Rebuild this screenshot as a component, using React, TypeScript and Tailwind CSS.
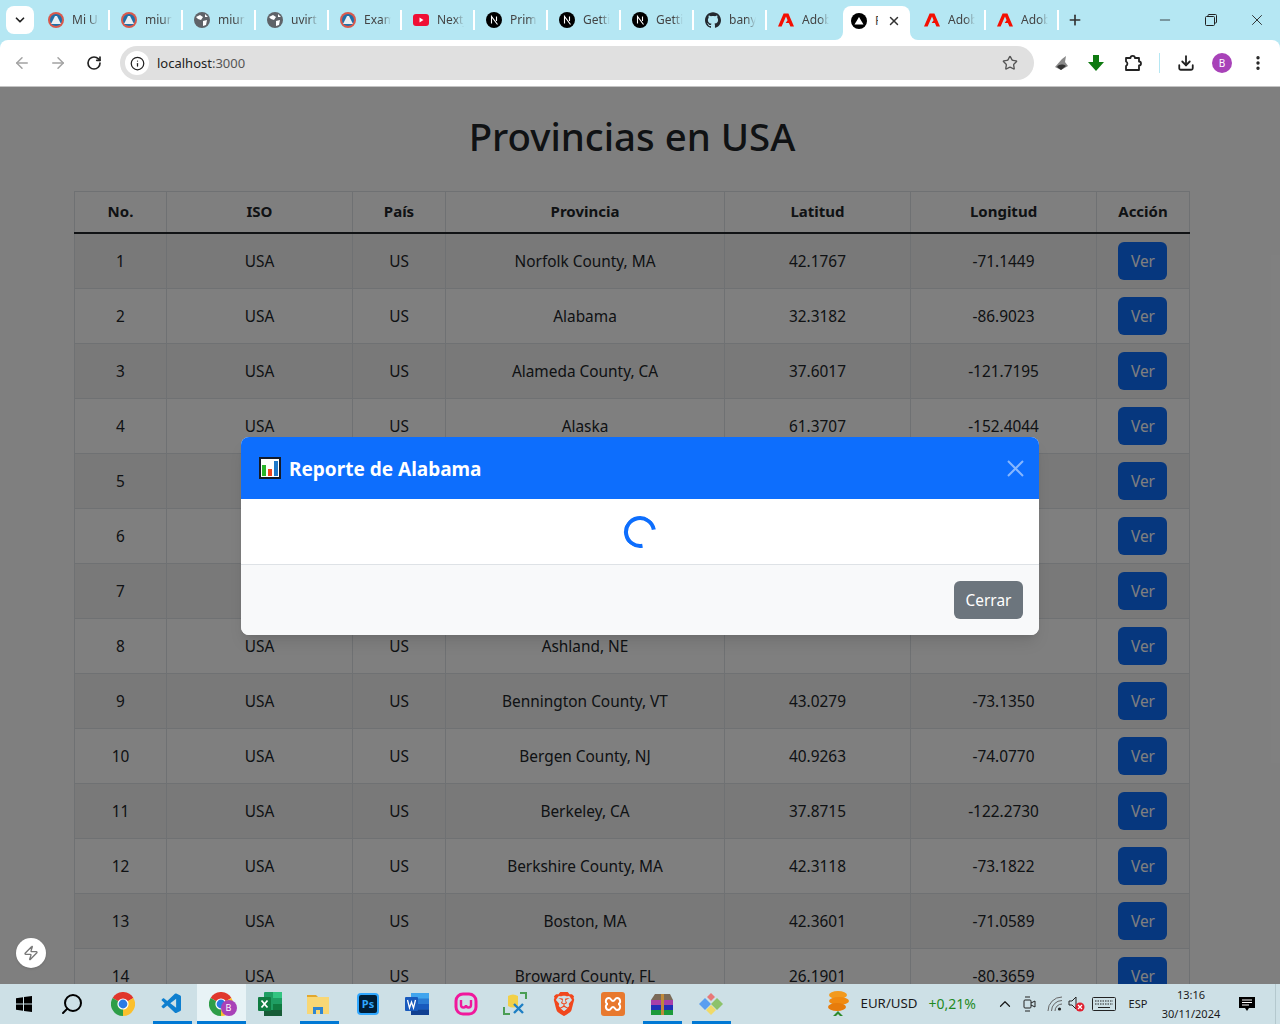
import React from 'react';
import { ArrowLeft, ArrowRight, RotateCw, Info, Star, X, Plus, Minus, ChevronDown, ChevronUp, Download, MoreVertical, Search, Zap } from 'lucide-react';
import { SiGithub, SiBrave } from 'react-icons/si';
import { VscVscode } from 'react-icons/vsc';

const rows = [
  { no: 1, iso: 'USA', pais: 'US', prov: 'Norfolk County, MA', lat: '42.1767', lng: '-71.1449' },
  { no: 2, iso: 'USA', pais: 'US', prov: 'Alabama', lat: '32.3182', lng: '-86.9023' },
  { no: 3, iso: 'USA', pais: 'US', prov: 'Alameda County, CA', lat: '37.6017', lng: '-121.7195' },
  { no: 4, iso: 'USA', pais: 'US', prov: 'Alaska', lat: '61.3707', lng: '-152.4044' },
  { no: 5, iso: '', pais: '', prov: '', lat: '', lng: '' },
  { no: 6, iso: '', pais: '', prov: '', lat: '', lng: '' },
  { no: 7, iso: '', pais: '', prov: '', lat: '', lng: '' },
  { no: 8, iso: 'USA', pais: 'US', prov: 'Ashland, NE', lat: '', lng: '' },
  { no: 9, iso: 'USA', pais: 'US', prov: 'Bennington County, VT', lat: '43.0279', lng: '-73.1350' },
  { no: 10, iso: 'USA', pais: 'US', prov: 'Bergen County, NJ', lat: '40.9263', lng: '-74.0770' },
  { no: 11, iso: 'USA', pais: 'US', prov: 'Berkeley, CA', lat: '37.8715', lng: '-122.2730' },
  { no: 12, iso: 'USA', pais: 'US', prov: 'Berkshire County, MA', lat: '42.3118', lng: '-73.1822' },
  { no: 13, iso: 'USA', pais: 'US', prov: 'Boston, MA', lat: '42.3601', lng: '-71.0589' },
  { no: 14, iso: 'USA', pais: 'US', prov: 'Broward County, FL', lat: '26.1901', lng: '-80.3659' },
];

// favicons
const Crest = () => (
  <svg width="16" height="16" viewBox="0 0 16 16">
    <circle cx="8" cy="8" r="8" fill="#d9594c" />
    <circle cx="8" cy="8" r="6" fill="#1f6fa8" />
    <path d="M3 12 L7 4 L9 4 L13 12 Z" fill="#e8eef2" />
  </svg>
);
const Globe = () => (
  <svg width="16" height="16" viewBox="0 0 16 16">
    <circle cx="8" cy="8" r="8" fill="#5f6368" />
    <path d="M2 5 L6 3 L9 5 L7 8 L4 7 Z M9 9 L13 8 L12 13 L9 14 Z M11 2 L14 5 L11 5 Z" fill="#fff" />
  </svg>
);
const Youtube = () => (
  <svg width="16" height="16" viewBox="0 0 16 16">
    <rect y="2" width="16" height="12" rx="3" fill="#f00f35" />
    <path d="M6.5 5.5 L10.5 8 L6.5 10.5 Z" fill="#fff" />
  </svg>
);
const NextLogo = () => (
  <svg width="16" height="16" viewBox="0 0 16 16">
    <circle cx="8" cy="8" r="8" fill="#000" />
    <path d="M5.5 11.5 V4.5 L11.5 12.5 M10.5 4.5 V9" stroke="#fff" strokeWidth="1.1" fill="none" />
  </svg>
);
const Vercel = () => (
  <svg width="16" height="16" viewBox="0 0 16 16">
    <circle cx="8" cy="8" r="8" fill="#000" />
    <path d="M8 4 L12.5 11.5 H3.5 Z" fill="#fff" />
  </svg>
);
const Adobe = () => (
  <svg width="16" height="16" viewBox="0 0 16 16">
    <path d="M5.6 1.5 H10.4 L16 14.5 H12.4 L10.9 11 H7.6 L9.6 8.2 L8 4.5 L3.6 14.5 H0 Z" fill="#f40f02" />
  </svg>
);
const Github = () => <SiGithub size={16} color="#24292f" />;

const tabs: { icon: React.ReactNode; label: string }[] = [
  { icon: <Crest />, label: 'Mi UMSA' },
  { icon: <Crest />, label: 'miuniversidad' },
  { icon: <Globe />, label: 'miuniversidad' },
  { icon: <Globe />, label: 'uvirtual' },
  { icon: <Crest />, label: 'Examen' },
  { icon: <Youtube />, label: 'Nextjs' },
  { icon: <NextLogo />, label: 'Primeros' },
  { icon: <NextLogo />, label: 'Getting' },
  { icon: <NextLogo />, label: 'Getting' },
  { icon: <Github />, label: 'banyan' },
  { icon: <Adobe />, label: 'Adobe' },
];

const Tab: React.FC<{ icon: React.ReactNode; label: string; last?: boolean }> = ({ icon, label, last }) => (
  <div className={`w-[73px] h-5 flex items-center pl-[11px] shrink-0 ${last ? '' : 'border-r-2 border-white'}`}>
    <span className="w-4 h-4 shrink-0">{icon}</span>
    <span className="ml-2 w-[27px] overflow-hidden whitespace-nowrap text-xs text-[#444] [mask-image:linear-gradient(to_right,black_65%,transparent)]">{label}</span>
  </div>
);

const TabStrip = () => (
  <div className="h-10 bg-[#b5e7f3] flex items-center shrink-0 font-['Noto_Sans',sans-serif]">
    <div className="ml-[6px] w-7 h-7 bg-white rounded-lg flex items-center justify-center shrink-0">
      <ChevronDown size={14} strokeWidth={3} color="#222" />
    </div>
    <div className="w-[3px] shrink-0" />
    {tabs.map((t, i) => (
      <Tab key={i} icon={t.icon} label={t.label} last={i === tabs.length - 1} />
    ))}
    <div className="w-[3px] shrink-0" />
    <div className="relative self-end h-[34px] w-[67px] bg-white rounded-t-lg flex items-center pl-2 pb-1 shrink-0">
      <span className="absolute -left-2 bottom-0 w-2 h-2 bg-white"><span className="block w-2 h-2 bg-[#b5e7f3] rounded-br-lg" /></span>
      <span className="absolute -right-2 bottom-0 w-2 h-2 bg-white"><span className="block w-2 h-2 bg-[#b5e7f3] rounded-bl-lg" /></span>
      <Vercel />
      <span className="ml-2 w-[3px] overflow-hidden text-xs text-[#444]">Reporte</span>
      <X size={14} strokeWidth={2.5} color="#333" className="ml-[9px]" />
    </div>
    <div className="w-[3px] shrink-0" />
    <Tab icon={<Adobe />} label="Adobe" />
    <Tab icon={<Adobe />} label="Adobe" />
    <Plus size={16} strokeWidth={2.5} color="#333" className="ml-[8px]" />
    <div className="ml-auto flex items-center">
      <div className="w-[46px] flex justify-center"><Minus size={16} color="#222" strokeWidth={1.2} /></div>
      <div className="w-[46px] flex justify-center">
        <svg width="12" height="12" viewBox="0 0 12 12" fill="none" stroke="#222"><rect x="0.5" y="2.5" width="9" height="9" rx="1" /><path d="M3 2.5 V1.5 a1 1 0 0 1 1-1 H10.5 a1 1 0 0 1 1 1 V8 a1 1 0 0 1-1 1 H9.5" /></svg>
      </div>
      <div className="w-[46px] flex justify-center"><X size={18} color="#222" strokeWidth={1.2} /></div>
    </div>
  </div>
);

const Toolbar = () => (
  <div className="h-[46px] bg-[#b5e7f3] shrink-0">
    <div className="h-full bg-white rounded-t-lg flex items-center font-['Noto_Sans',sans-serif]">
      <ArrowLeft size={18} color="#a3a3a3" className="ml-[13px]" />
      <ArrowRight size={18} color="#a3a3a3" className="ml-[18px]" />
      <RotateCw size={16} strokeWidth={2.5} color="#222" className="ml-[19px]" />
      <div className="ml-[18px] w-[914px] h-[34px] bg-[#e0e0e0] rounded-full flex items-center pl-[5px]">
        <div className="w-6 h-6 bg-white rounded-full flex items-center justify-center"><Info size={15} color="#222" /></div>
        <span className="ml-2 pt-[2px] text-[13px] text-[#222]">localhost<span className="text-[#555]">:3000</span></span>
        <Star size={16} color="#555" className="ml-auto mr-4" />
      </div>
      <svg width="18" height="18" viewBox="0 0 18 18" className="ml-[18px]">
        <path d="M3 13 L10 5 L14 2 L13 8 L16 12 L9 16 Z" fill="#8a8a8a" />
        <path d="M5 13 C7 10 11 10 14 12 L9 16 Z" fill="#333" />
      </svg>
      <svg width="18" height="18" viewBox="0 0 18 18" className="ml-[17px]"><path d="M6 1 H12 V8 H17 L9 17 L1 8 H6 Z" fill="#0e7a10" /></svg>
      <svg width="18" height="18" viewBox="0 0 18 18" fill="none" stroke="#222" strokeWidth="1.8" className="ml-[19px]">
        <path d="M2 4 H6.5 a2.2 2.2 0 0 1 4.4 0 H15 V7.5 a2 2 0 0 1 0 4 V16 H2 V12 a2.5 2.5 0 0 0 0-4.5 Z" strokeLinejoin="round" />
      </svg>
      <div className="ml-[17px] w-[1px] h-5 bg-[#b5e7f3]" />
      <Download size={18} color="#222" strokeWidth={2.4} className="ml-[17px]" />
      <div className="ml-[17px] w-5 h-5 rounded-full bg-[#a842b8] flex items-center justify-center text-[10px] text-white">B</div>
      <MoreVertical size={18} color="#222" strokeWidth={2.5} className="ml-[17px]" />
    </div>
  </div>
);

const ReportIcon = () => (
  <svg width="22" height="22" viewBox="0 0 22 22">
    <rect x="1" y="1" width="20" height="20" fill="#fff" stroke="#131a28" strokeWidth="2" />
    <rect x="3" y="8" width="4" height="11" fill="#2ab52a" />
    <rect x="9" y="12" width="4" height="7" fill="#f0441c" />
    <rect x="15" y="4" width="4" height="15" fill="#1e78c8" />
  </svg>
);

const Modal = () => (
  <div className="absolute inset-0 bg-black/50 flex justify-center items-start">
    <div className="mt-[350px] w-[798px] rounded-lg bg-white overflow-hidden shadow-lg">
      <div className="h-[62px] bg-[#0d6efd] flex items-center pl-[18px] pr-[15px] text-white">
        <ReportIcon />
        <h5 className="ml-2 pt-[2px] text-[19px] font-bold">Reporte de Alabama</h5>
        <svg width="17" height="17" viewBox="0 0 17 17" className="ml-auto stroke-white/50" strokeWidth="2"><path d="M1 1 L16 16 M16 1 L1 16" /></svg>
      </div>
      <div className="h-[65px] flex items-center justify-center">
        <div className="w-8 h-8 rounded-full border-4 border-[#0d6efd] border-r-transparent rotate-[35deg]" />
      </div>
      <div className="h-[71px] bg-[#f8f9fa] border-t border-[#dee2e6] flex items-center justify-end px-4">
        <button className="h-[38px] w-[69px] pt-[2px] rounded-md bg-[#6c757d] text-white text-[15.4px]">Cerrar</button>
      </div>
    </div>
  </div>
);

const cell = 'border-x border-[#dee2e6] px-2 pt-[9px] pb-[7px]';

const Page = () => (
  <div className="relative flex-1 overflow-hidden bg-white font-['Noto_Sans',sans-serif] text-[#212529]">
    <div className="w-[1264px]">
      <div className="w-[1140px] mx-auto px-3 pt-[25px]">
        <h1 className="text-[38.4px] leading-[48px] font-medium text-center mb-[31px]">Provincias en USA</h1>
        <table className="w-[1115px] table-fixed border-collapse border border-[#dee2e6] text-center text-[15.4px]">
          <colgroup>
            <col className="w-[92px]" />
            <col className="w-[186px]" />
            <col className="w-[93px]" />
            <col className="w-[279px]" />
            <col className="w-[186px]" />
            <col className="w-[186px]" />
            <col className="w-[93px]" />
          </colgroup>
          <thead>
            <tr className="border-b-2 border-[#212529]">
              {['No.', 'ISO', 'País', 'Provincia', 'Latitud', 'Longitud', 'Acción'].map(h => (
                <th key={h} className="border-x border-[#dee2e6] h-[41px] px-2 pt-[6px] pb-[8px] text-[15px] font-bold">{h}</th>
              ))}
            </tr>
          </thead>
          <tbody>
            {rows.map(r => (
              <tr key={r.no} className={`h-[55px] border-b border-[#dee2e6] ${r.no % 2 === 1 ? 'bg-[#f2f2f2]' : ''}`}>
                <td className={cell}>{r.no}</td>
                <td className={cell}>{r.iso}</td>
                <td className={cell}>{r.pais}</td>
                <td className={cell}>{r.prov}</td>
                <td className={cell}>{r.lat}</td>
                <td className={cell}>{r.lng}</td>
                <td className="border-x border-[#dee2e6] pl-[5px] pr-[7px] py-2">
                  <button className="h-[38px] w-[49px] pt-[2px] pl-[2px] rounded-md bg-[#0d6efd] text-white">Ver</button>
                </td>
              </tr>
            ))}
          </tbody>
        </table>
      </div>
    </div>
    <Modal />
    <div className="absolute left-4 bottom-4 w-[30px] h-[30px] rounded-full bg-white flex items-center justify-center shadow">
      <Zap size={16} color="#777" />
    </div>
  </div>
);

// small taskbar glyphs
const Chrome = () => (
  <svg width="24" height="24" viewBox="0 0 24 24">
    <path d="M12 12 L22.4 6 A12 12 0 0 0 1.6 6 Z" fill="#e0362c" />
    <path d="M12 12 L1.6 6 A12 12 0 0 0 12 24 Z" fill="#2e9e48" />
    <path d="M12 12 L12 24 A12 12 0 0 0 22.4 6 Z" fill="#fbc02d" />
    <circle cx="12" cy="12" r="5.6" fill="#fff" />
    <circle cx="12" cy="12" r="4.4" fill="#2a7ae4" />
  </svg>
);
const Excel = () => (
  <svg width="24" height="24" viewBox="0 0 24 24">
    <rect x="6" y="0" width="18" height="24" rx="1" fill="#1f9e63" />
    <rect x="15" y="0" width="9" height="6" fill="#33c481" />
    <rect x="15" y="12" width="9" height="6" fill="#107c41" />
    <rect x="6" y="18" width="18" height="6" fill="#185c37" />
    <rect x="0" y="5" width="13" height="14" rx="1" fill="#107c41" />
    <path d="M3.5 8.5 L9.5 15.5 M9.5 8.5 L3.5 15.5" stroke="#fff" strokeWidth="1.8" />
  </svg>
);
const Folder = () => (
  <svg width="24" height="24" viewBox="0 0 24 24">
    <path d="M0 3 H9 L11 5 H0 Z" fill="#e2a72e" />
    <rect y="5" width="22" height="17" fill="#f8d775" />
    <path d="M6 22 V15 H16 V22 H13 V18 H9 V22 Z" fill="#2f86d1" />
  </svg>
);
const Word = () => (
  <svg width="24" height="24" viewBox="0 0 24 24">
    <rect x="6" y="1" width="18" height="22" rx="1" fill="#2b7cd3" />
    <rect x="6" y="1" width="18" height="5.5" fill="#41a5ee" />
    <rect x="6" y="12" width="18" height="5.5" fill="#185abd" />
    <rect x="6" y="17.5" width="18" height="5.5" fill="#103f91" />
    <rect x="0" y="5" width="13" height="14" rx="1" fill="#185abd" />
    <path d="M2.5 8 L4.5 16 L6.5 10 L8.5 16 L10.5 8" stroke="#fff" strokeWidth="1.3" fill="none" />
  </svg>
);
const Wamp = () => (
  <svg width="24" height="24" viewBox="0 0 24 24" fill="none" stroke="#f0189c" strokeWidth="3">
    <rect x="2" y="2" width="20" height="20" rx="7" />
    <path d="M7 8 V13 A2.5 2.5 0 0 0 12 13 A2.5 2.5 0 0 0 17 13 V8" strokeWidth="2.4" />
  </svg>
);
const Workbench = () => (
  <svg width="24" height="24" viewBox="0 0 24 24">
    <path d="M5 4 Q10 1 15 4 V14 Q10 17 5 14 Z" fill="#f2d048" />
    <path d="M1 15 V22 H7 M17 1 H23 V7" stroke="#4a9e54" strokeWidth="2" fill="none" />
    <path d="M11 12 L20 21 M20 12 L11 21" stroke="#1d7fc4" strokeWidth="2.4" />
  </svg>
);
const Xampp = () => (
  <svg width="24" height="24" viewBox="0 0 24 24">
    <rect width="24" height="24" rx="3" fill="#e8792e" />
    <path d="M8 6 C10 6 10 9 12 9 C14 9 14 6 16 6 C20 6 20 12 17 12 C20 12 20 18 16 18 C14 18 14 15 12 15 C10 15 10 18 8 18 C4 18 4 12 7 12 C4 12 4 6 8 6 Z" fill="none" stroke="#fff" strokeWidth="2" />
  </svg>
);
const Rar = () => (
  <svg width="24" height="24" viewBox="0 0 24 24">
    <path d="M1 8 L5 2 H20 L23 8 Z" fill="#7a6a58" />
    <rect x="1" y="8" width="22" height="5" fill="#a83fa8" />
    <rect x="1" y="13" width="22" height="5" fill="#2030b8" />
    <rect x="1" y="18" width="22" height="5" fill="#1c9a3a" />
    <rect x="11" y="2" width="3" height="21" fill="#c08a3a" />
  </svg>
);
const Kraken = () => (
  <svg width="24" height="24" viewBox="0 0 24 24">
    <path d="M12 12 L6 6 L0 12 L6 18 Z" fill="#5a9ef0" />
    <path d="M12 12 L18 6 L24 12 L18 18 Z" fill="#8cc26a" />
    <path d="M12 13 L7 18 L12 23 L17 18 Z" fill="#f0da68" />
    <path d="M12 1 L8 5 L12 9 L16 5 Z" fill="#e87878" />
  </svg>
);
const Coins = () => (
  <svg width="24" height="28" viewBox="0 0 24 28">
    <ellipse cx="12" cy="5" rx="9" ry="4" fill="#f39a1e" />
    <ellipse cx="13" cy="11" rx="10" ry="4" fill="#f08a12" />
    <ellipse cx="11" cy="17" rx="9" ry="4" fill="#e77c0c" />
    <path d="M7 26 L12 21 L17 26 L14 26 L12 24 L10 26 Z" fill="#2e8b2e" />
  </svg>
);

const TaskItem: React.FC<{ children: React.ReactNode; line?: boolean; active?: boolean }> = ({ children, line, active }) => (
  <div className={`relative w-[49px] h-10 flex items-center justify-center shrink-0 ${active ? 'bg-[#e8f3f6]' : ''}`}>
    {children}
    {line && <span className="absolute bottom-0 left-[5px] right-[5px] h-[3px] bg-[#0078d4]" />}
    {active && <span className="absolute bottom-0 left-0 right-0 h-[3px] bg-[#0078d4]" />}
  </div>
);

const Taskbar = () => (
  <div className="h-10 bg-[#cde0e6] flex items-center shrink-0 font-['Noto_Sans',sans-serif] text-[#1a1a1a]">
    <div className="w-12 flex justify-center">
      <svg width="16" height="16" viewBox="0 0 16 16" fill="#000"><path d="M0 2.2 L7 1.2 V7.5 H0 Z M8 1 L16 0 V7.5 H8 Z M0 8.5 H7 V14.8 L0 13.8 Z M8 8.5 H16 V16 L8 15 Z" /></svg>
    </div>
    <div className="w-12 flex justify-center"><Search size={24} strokeWidth={2} color="#000" className="-scale-x-100" /></div>
    <div className="w-[2.5px] shrink-0" />
    <TaskItem><Chrome /></TaskItem>
    <TaskItem line><VscVscode size={24} color="#0e7fcf" /></TaskItem>
    <TaskItem active>
      <Chrome />
      <span className="absolute left-[24px] top-[16px] w-4 h-4 rounded-full bg-[#a842b8] flex items-center justify-center text-[9px] text-white">B</span>
    </TaskItem>
    <TaskItem><Excel /></TaskItem>
    <TaskItem line><Folder /></TaskItem>
    <TaskItem>
      <div className="w-[22px] h-[22px] bg-[#001e36] border-2 border-[#31a8ff] rounded flex items-center justify-center text-[11px] font-bold text-[#31a8ff]">Ps</div>
    </TaskItem>
    <TaskItem><Word /></TaskItem>
    <TaskItem><Wamp /></TaskItem>
    <TaskItem><Workbench /></TaskItem>
    <TaskItem><SiBrave size={24} color="#f1471d" /></TaskItem>
    <TaskItem><Xampp /></TaskItem>
    <TaskItem line><Rar /></TaskItem>
    <TaskItem line><Kraken /></TaskItem>
    <div className="ml-[90px] shrink-0"><Coins /></div>
    <span className="ml-[11px] text-[13.3px]">EUR/USD</span>
    <span className="ml-[11px] text-sm text-[#1f8a1f]">+0,21%</span>
    <ChevronUp size={18} strokeWidth={1.6} className="ml-[20px]" />
    <svg width="14" height="18" viewBox="0 0 14 18" fill="none" stroke="#222" className="ml-[8px]"><rect x="2" y="5" width="7" height="8" rx="1" /><path d="M9 8 L13 6 V12 L9 10 M3 2 H8 M3 16 H8" /></svg>
    <svg width="16" height="16" viewBox="0 0 16 16" fill="none" stroke="#666" className="ml-[11px]"><path d="M1 15 A14 14 0 0 1 15 1 M4.5 15 A10.5 10.5 0 0 1 15 4.5 M8 15 A7 7 0 0 1 15 8" /><circle cx="12.5" cy="13" r="1.6" fill="#222" stroke="none" /></svg>
    <svg width="18" height="18" viewBox="0 0 18 18" className="ml-[5px]">
      <path d="M1 6 H4 L8 2 V14 L4 10 H1 Z" fill="none" stroke="#222" />
      <circle cx="12" cy="12" r="4.5" fill="#e02030" />
      <path d="M10 10 L14 14 M14 10 L10 14" stroke="#fff" strokeWidth="1.2" />
    </svg>
    <svg width="24" height="14" viewBox="0 0 24 14" fill="none" stroke="#222" className="ml-[6px]"><rect x="0.5" y="0.5" width="23" height="13" rx="1" /><path d="M3 4 H21 M3 7 H21" strokeDasharray="1.5 1" /><path d="M6 10.5 H18" /></svg>
    <span className="ml-[12px] w-5 text-[11px] text-center">ESP</span>
    <div className="ml-[13px] w-[60px] flex flex-col items-center text-[11px] leading-[19px] whitespace-nowrap"><span>13:16</span><span>30/11/2024</span></div>
    <svg width="16" height="16" viewBox="0 0 16 16" className="ml-[18px]"><path d="M0 1 H16 V12 H10 L8 15 L6 12 H0 Z" fill="#000" /><path d="M3 4 H13 M3 6.5 H13 M3 9 H10" stroke="#fff" /></svg>
    <div className="ml-5 w-px h-full bg-[#b4c8ce]" />
  </div>
);

export default function App() {
  return (
    <div className="h-screen w-[1280px] flex flex-col overflow-hidden">
      <TabStrip />
      <Toolbar />
      <div className="h-[1px] bg-[#c4c4c4] shrink-0" />
      <Page />
      <Taskbar />
    </div>
  );
}
